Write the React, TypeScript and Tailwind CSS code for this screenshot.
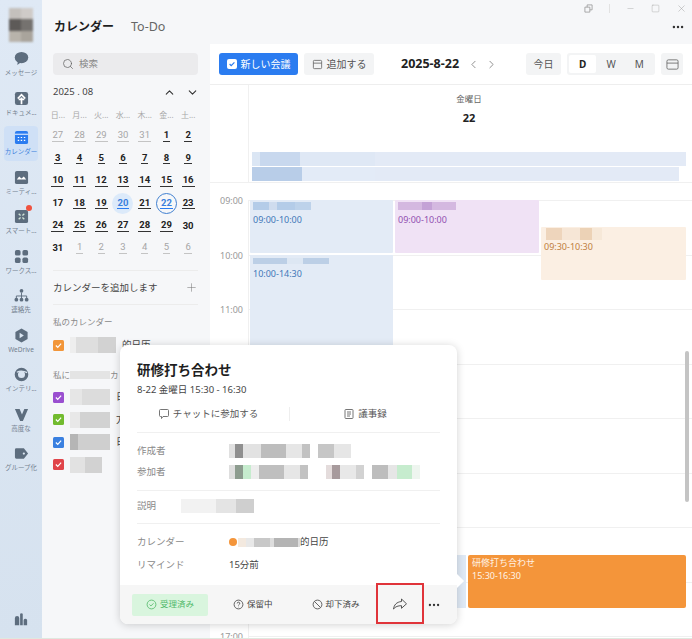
import { ChevronDown, ChevronLeft, ChevronRight, ChevronUp, Plus, Search, X, Minus, Square, MoreHorizontal } from "lucide-react";

const ink = "#5d6d7e";

// mosaic used where names were blurred out in the screenshot
function Blur({ cells, h, className = "" }: { cells: [string, number][]; h: number; className?: string }) {
  return (
    <div className={`flex shrink-0 blur-[0.6px] ${className}`} style={{ height: h }}>
      {cells.map(([color, w], i) => (
        <div key={i} style={{ background: color, width: w }} />
      ))}
    </div>
  );
}

const railIcons: Record<string, React.ReactNode> = {
  msg: (
    <svg viewBox="0 0 16 16" className="h-[15px] w-[15px]" fill={ink}>
      <ellipse cx="8" cy="7" rx="7.2" ry="6" />
      <path d="M4 11l-.5 4 4-3z" />
    </svg>
  ),
  doc: (
    <svg viewBox="0 0 16 16" className="h-[15px] w-[15px]">
      <rect x="1" y="1" width="14" height="14" rx="2.5" fill={ink} />
      <path d="M8 14V7M4 8l4-4 4 4M5 9h6" stroke="#fff" strokeWidth="1.8" fill="none" />
    </svg>
  ),
  cal: (
    <svg viewBox="0 0 16 16" className="h-[15px] w-[15px]">
      <rect x="1" y="1" width="14" height="14" rx="2" fill="#2b7cf0" />
      <rect x="1" y="4" width="14" height="1" fill="#fff" />
      <path d="M4 8h1.5M7.2 8h1.5M10.5 8H12M4 11h1.5M7.2 11h1.5M10.5 11H12" stroke="#fff" strokeWidth="1.2" />
    </svg>
  ),
  meet: (
    <svg viewBox="0 0 16 16" className="h-[15px] w-[15px]">
      <rect x="1" y="1" width="14" height="14" rx="2" fill={ink} />
      <path d="M3 10l2.5-3 2.5 2 2.500-2 2.500 3z" fill="#fff" />
    </svg>
  ),
  smart: (
    <svg viewBox="0 0 16 16" className="h-[15px] w-[15px]">
      <rect x="1" y="1" width="14" height="14" rx="2" fill={ink} />
      <path d="M5 5l2 2M11 5L9 7M5 11l2-2M11 11L9 9" stroke="#cfe3d8" strokeWidth="1.400" />
    </svg>
  ),
  work: (
    <svg viewBox="0 0 16 16" className="h-[15px] w-[15px]" fill={ink}>
      <rect x="1" y="1" width="6" height="6" rx="1.800" />
      <rect x="9" y="1" width="6" height="6" rx="1.800" />
      <rect x="1" y="9" width="6" height="6" rx="1.800" />
      <rect x="9" y="9" width="6" height="6" rx="1.800" />
    </svg>
  ),
  org: (
    <svg viewBox="0 0 16 16" className="h-[15px] w-[15px]" fill={ink}>
      <circle cx="8" cy="3" r="2" />
      <path d="M2.500 11V8.500h11V11M8 5v6" stroke={ink} strokeWidth="1" fill="none" />
      <circle cx="2.500" cy="12.500" r="2" />
      <circle cx="8" cy="12.500" r="2" />
      <circle cx="13.500" cy="12.500" r="2" />
    </svg>
  ),
  drive: (
    <svg viewBox="0 0 16 16" className="h-[15px] w-[15px]">
      <path d="M8 .5l6.500 3.700v7.600L8 15.500l-6.500-3.700V4.200z" fill={ink} />
      <path d="M6 5l4.500 3L6 11z" fill="#dbe6f2" />
    </svg>
  ),
  ai: (
    <svg viewBox="0 0 16 16" className="h-[15px] w-[15px]" fill="none">
      <circle cx="8" cy="8" r="5.500" stroke={ink} strokeWidth="3.500" />
      <path d="M3 5.500C6 4 10 4 14 6" stroke="#dbe6f2" strokeWidth="1.200" />
    </svg>
  ),
  v: (
    <svg viewBox="0 0 16 16" className="h-[15px] w-[15px]" fill={ink}>
      <path d="M1 2h5l2.500 6L11 2h4l-5.500 13H6.500z" />
    </svg>
  ),
  tag: (
    <svg viewBox="0 0 16 16" className="h-[15px] w-[15px]" fill={ink}>
      <path d="M1 4a1.500 1.500 0 0 1 1.500-1.500h8L15 8l-4.500 5.500h-8A1.500 1.500 0 0 1 1 12z" />
      <circle cx="10.500" cy="8" r="1.200" fill="#dbe6f2" />
    </svg>
  ),
};

const railItems = [
  { icon: "msg", label: "メッセージ" },
  { icon: "doc", label: "ドキュメ..." },
  { icon: "cal", label: "カレンダー", active: true },
  { icon: "meet", label: "ミーティ..." },
  { icon: "smart", label: "スマート...", badge: true },
  { icon: "work", label: "ワークス..." },
  { icon: "org", label: "連絡先" },
  { icon: "drive", label: "WeDrive" },
  { icon: "ai", label: "インテリ..." },
  { icon: "v", label: "高度な" },
  { icon: "tag", label: "グループ化" },
];

function Rail() {
  return (
    <div className="flex h-full w-[42px] shrink-0 flex-col items-center bg-gradient-to-b from-[#dfe9f5] to-[#d6e2ef]">
      <div className="mt-[8px] mb-[5px] grid h-[34px] w-[24px] grid-cols-2 blur-[1px]">
        <div className="bg-[#c4c0bc]" />
        <div className="bg-[#cfcbc8]" />
        <div className="bg-[#5d5a58]" />
        <div className="bg-[#75726f]" />
        <div className="bg-[#b8b3ab]" />
        <div className="bg-[#a9a49c]" />
      </div>
      {railItems.map((item) => (
        <div
          key={item.label}
          className={`relative mb-[4.500px] flex h-[35px] w-[34px] flex-col items-center justify-center gap-[2px] rounded-[4px] ${item.active ? "bg-[#cfe0f6]" : ""}`}
        >
          {railIcons[item.icon]}
          {item.badge && <span className="absolute top-[0px] right-[6px] h-[6px] w-[6px] rounded-full bg-[#f0523f]" />}
          <span className={`w-[42px] overflow-hidden text-center text-[6.500px] leading-[10px] whitespace-nowrap ${item.active ? "text-[#3b7fdc]" : "text-[#748190]"}`}>
            {item.label}
          </span>
        </div>
      ))}
      <div className="mt-auto mb-[13px]">
        <svg viewBox="0 0 16 16" className="h-[14px] w-[14px]" fill={ink}>
          <path d="M1 7a2.500 2.500 0 0 1 5 0v8H1zM7 2a2.500 2.500 0 0 1 3 0v13H7zM11 9a2.200 2.200 0 0 1 4 0v6h-4z" />
        </svg>
      </div>
    </div>
  );
}

const weekdays = ["日...", "月...", "火...", "水...", "木...", "金...", "土..."];
const dates = [
  27, 28, 29, 30, 31, 1, 2, 3, 4, 5, 6, 7, 8, 9, 10, 11, 12, 13, 14, 15, 16, 17, 18, 19, 20, 21, 22, 23, 24, 25, 26, 27,
  28, 29, 30, 31, 1, 2, 3, 4, 5, 6,
];

function MiniCalendar() {
  return (
    <div className="mt-[1px] -ml-[6px] grid w-[152px] grid-cols-7">
      {weekdays.map((d) => (
        <div key={d} className="flex h-[21px] items-center justify-center text-[8px] text-[#a8a8a8]">
          {d}
        </div>
      ))}
      {dates.map((d, i) => {
        const muted = i < 5 || i > 35;
        const noLine = i === 21 || i === 34 || i === 35;
        const today = i === 24;
        const picked = i === 26;
        return (
          <div key={i} className="flex h-[22.400px] items-center justify-center">
            <span
              className={`flex h-[21px] w-[21px] items-center justify-center rounded-full font-['Roboto',sans-serif] text-[9.500px] leading-none ${
                today ? "bg-[#dceafa]" : picked ? "border-[1.500px] border-[#3f7fd0]" : ""
              }`}
            >
              <span
                className={`px-[1px] pb-[1px] ${muted ? "font-normal" : "font-bold"} ${noLine ? "" : "border-b"} ${
                  today || picked
                    ? "border-[#2b7cf0] text-[#3b7fdc]"
                    : muted
                      ? "border-[#c4c4c4] text-[#a6a6a6]"
                      : "border-[#333] text-[#222]"
                }`}
              >
                {d}
              </span>
            </span>
          </div>
        );
      })}
    </div>
  );
}

function Check({ color }: { color: string }) {
  return (
    <span className={`flex h-[11px] w-[11px] shrink-0 items-center justify-center rounded-[1.500px] ${color}`}>
      <svg viewBox="0 0 12 12" className="h-[9px] w-[9px]" fill="none" stroke="#fff" strokeWidth="1.600">
        <path d="M2.500 6l2.500 2.500L9.500 3.500" />
      </svg>
    </span>
  );
}

const otherCalendars = [
  { color: "bg-[#9a4fd0]", cells: [["#e6e6e6", 12], ["#dcdcdc", 28]] as [string, number][], tail: "日" },
  { color: "bg-[#72bb2f]", cells: [["#e8e8e8", 10], ["#d2d2d2", 30]] as [string, number][], tail: "方" },
  { color: "bg-[#3a80e0]", cells: [["#b5b5b5", 8], ["#cfcfcf", 32]] as [string, number][], tail: "日历" },
  { color: "bg-[#e0444a]", cells: [["#e2e2e2", 15], ["#d2d2d2", 17]] as [string, number][], tail: "" },
];

function Sidebar() {
  return (
    <div className="flex w-[168px] shrink-0 flex-col bg-[#f6f7f9] px-[11px] pt-[9px]">
      <div className="flex h-[22px] w-[145px] items-center gap-[5px] rounded-[4px] bg-[#ebebed] px-[9px] text-[9.500px] text-[#888]">
        <Search size={12} strokeWidth={1.500} className="text-[#666]" />
        検索
      </div>
      <div className="mt-[6px] flex h-[22px] w-[146px] items-center justify-between text-[9.500px] text-[#444]">
        <span>2025 . 08</span>
        <span className="-ml-[4px] flex gap-[10px] text-[#333]">
          <ChevronUp size={13} />
          <ChevronDown size={13} />
        </span>
      </div>
      <MiniCalendar />
      <div className="mt-[11px] w-[145px] border-t border-[#ececec]" />
      <div className="flex h-[33px] w-[145px] items-center justify-between text-[9.500px] text-[#444]">
        カレンダーを追加します
        <Plus size={13} strokeWidth={1} className="text-[#777]" />
      </div>
      <div className="w-[145px] border-t border-[#ececec]" />
      <div className="mt-[10px] text-[8.500px] leading-[13px] text-[#8a8a8a]">私のカレンダー</div>
      <div className="mt-[9px] flex h-[16px] items-center gap-[6px] text-[9.500px] text-[#444]">
        <Check color="bg-[#f2963a]" />
        <Blur h={16} cells={[["#eeeeee", 6], ["#dedede", 22], ["#d2d2d2", 18]]} />
        的日历
      </div>
      <div className="mt-[15px] flex items-center text-[8.500px] leading-[13px] text-[#8a8a8a]">
        私に
        <Blur h={8} cells={[["#e4e4e4", 40]]} />
        カ
      </div>
      <div className="mt-[8px] flex flex-col gap-[6.400px]">
        {otherCalendars.map((c) => (
          <div key={c.color} className="flex h-[16px] items-center gap-[6px] text-[9.500px] text-[#444]">
            <Check color={c.color} />
            <Blur h={16} cells={c.cells} />
            {c.tail}
          </div>
        ))}
      </div>
    </div>
  );
}

function Toolbar() {
  return (
    <div className="flex h-[41px] shrink-0 items-center border-b border-[#eeeeee] pl-[9px] text-[10px]">
      <button className="flex h-[22px] w-[79px] items-center justify-center gap-[4px] rounded-[3px] bg-[#2b7cf0] text-[10px] text-white">
        <span className="flex h-[10px] w-[10px] items-center justify-center rounded-[2px] bg-white">
          <svg viewBox="0 0 10 10" className="h-[8px] w-[8px]" fill="none" stroke="#2b7cf0" strokeWidth="1.500">
            <path d="M2 5l2 2 4-4" />
          </svg>
        </span>
        新しい会議
      </button>
      <button className="ml-[6px] flex h-[22px] w-[70px] items-center justify-center gap-[4px] rounded-[3px] bg-[#f3f4f5] text-[#555]">
        <svg viewBox="0 0 12 12" className="h-[11px] w-[11px]" fill="none" stroke="#666" strokeWidth="0.900">
          <rect x="1.500" y="1.500" width="9" height="9" rx="1" />
          <path d="M1.500 4.500h9" />
        </svg>
        追加する
      </button>
      <span className="ml-[27px] text-[12.500px] font-bold text-[#222]">2025-8-22</span>
      <ChevronLeft size={13} strokeWidth={1.500} className="ml-[8px] text-[#777]" />
      <ChevronRight size={13} strokeWidth={1.500} className="ml-[5px] text-[#777]" />
      <button className="ml-[28px] h-[22px] w-[35px] rounded-[3px] bg-[#f3f4f5] text-[#555]">今日</button>
      <div className="ml-[6px] flex h-[22px] w-[88px] items-center rounded-[3px] bg-[#f3f4f5] p-[2px] text-[10px] text-[#555]">
        <span className="flex h-full w-[28px] items-center justify-center rounded-[2px] bg-white font-bold text-[#222]">D</span>
        <span className="flex h-full w-[30px] items-center justify-center">W</span>
        <span className="flex h-full w-[28px] items-center justify-center">M</span>
      </div>
      <button className="ml-[6px] flex h-[22px] w-[22px] items-center justify-center rounded-[3px] bg-[#f3f4f5]">
        <svg viewBox="0 0 14 14" className="h-[13px] w-[13px]" fill="none" stroke="#666" strokeWidth="0.900">
          <rect x="1" y="2" width="12" height="10" rx="1.500" />
          <path d="M1 5.500h12" />
        </svg>
      </button>
    </div>
  );
}

const hours = ["09:00", "10:00", "11:00", "", "", "", "", "16:00", "17:00"];

function DayGrid() {
  return (
    <div className="flex min-h-0 flex-1 flex-col overflow-hidden">
      <div className="flex h-[98px] shrink-0 border-b border-[#f0f0f0]">
        <div className="w-[39px] shrink-0 border-r border-[#f0f0f0]" />
        <div className="flex-1 pt-[8px] pr-[6px] pl-[3px]">
          <div className="text-center text-[8.500px] leading-[12px] text-[#666]">金曜日</div>
          <div className="mt-[6px] text-center text-[11px] leading-[14px] font-bold text-[#222]">22</div>
          <div className="mt-[27px] flex h-[14px] bg-[#e3eaf6]">
            <Blur h={14} cells={[["#dbe6f4", 8], ["#c8d8ee", 40], ["#dfe8f5", 75]]} />
          </div>
          <div className="mt-[1px] mr-[7px] flex h-[14px] bg-[#e3eaf6]">
            <Blur h={14} cells={[["#b8cde8", 50], ["#e3ebf7", 73]]} />
          </div>
        </div>
      </div>
      <div className="relative flex-1">
        <div className="pt-[17px]">
          {hours.map((h, i) => (
            <div key={i} className="flex h-[54.500px]">
              <div className="w-[39px] shrink-0 border-r border-[#f0f0f0] pl-[10px]">
                <span className="relative -top-[6px] block text-[9px] leading-[14px] text-[#999]">{h}</span>
              </div>
              <div className="flex-1 border-t border-[#f0f0f0]" />
            </div>
          ))}
        </div>

        <div className="absolute top-[17px] left-[40px] h-[53px] w-[143px] rounded-[1px] bg-[#e3ebf6] pl-[3px] text-[9px] text-[#3f78b8]">
          <Blur h={8} className="mt-[2px]" cells={[["#b4cce8", 16], ["#cfdcee", 8], ["#b4cce8", 18], ["#bdd2ea", 16]]} />
          <div className="mt-[3px]">09:00-10:00</div>
        </div>
        <div className="absolute top-[72px] left-[40px] h-[300px] w-[143px] bg-[#e3ebf6] pl-[3px] text-[9px] text-[#3f78b8]">
          <Blur h={6} className="mt-[3px]" cells={[["#bccfe6", 34], ["#dde7f3", 16], ["#bccfe6", 26]]} />
          <div className="mt-[3px]">10:00-14:30</div>
        </div>
        <div className="absolute top-[17px] left-[185px] h-[53px] w-[144px] rounded-[1px] bg-[#f0e2f5] pl-[3px] text-[9px] text-[#9050b0]">
          <Blur h={8} className="mt-[2px]" cells={[["#d4b8e0", 24], ["#c4a2d6", 10], ["#d4b8e0", 24]]} />
          <div className="mt-[3px]">09:00-10:00</div>
        </div>
        <div className="absolute top-[44px] left-[331px] h-[53px] w-[145px] rounded-[1px] bg-[#fbefe3] pl-[3px] text-[9px] text-[#c08040]">
          <Blur h={12} className="mt-[1px] ml-[2px]" cells={[["#eed5bc", 16], ["#f6e6d6", 18], ["#ecd2b6", 12], ["#f6e8d8", 10]]} />
          <div className="mt-[0px]">09:30-10:30</div>
        </div>
        <div className="absolute top-[372px] left-[240px] h-[53px] w-[16px] bg-[#dfe9f5]" />
        <div className="absolute top-[372px] left-[258px] h-[53px] w-[218px] rounded-[2px] bg-[#f4953a] pl-[4px] text-[9px] leading-[13px] text-[#fff3e6]">
          <div className="mt-[1px]">研修打ち合わせ</div>
          <div>15:30-16:30</div>
        </div>
        <div className="absolute top-[168px] right-[3px] h-[151px] w-[4px] rounded-full bg-[#c4c4c4]" />
      </div>
    </div>
  );
}

function InfoRow({ label, children, className = "", labelWidth = "w-[92px]" }: { label: string; children: React.ReactNode; className?: string; labelWidth?: string }) {
  return (
    <div className={`flex items-center text-[9.500px] ${className}`}>
      <span className={`shrink-0 text-[#8a8a8a] ${labelWidth}`}>{label}</span>
      {children}
    </div>
  );
}

function Popover() {
  return (
    <div className="absolute top-[345px] left-[120px] flex h-[279px] w-[337px] flex-col rounded-[8px] bg-white shadow-[0_1px_8px_rgba(0,0,0,0.18)]">
      <span className="absolute top-[231px] -right-[5px] h-[10px] w-[10px] rotate-45 bg-white" />
      <div className="flex-1 px-[17px] pt-[15px]">
        <div className="text-[13.500px] leading-[20px] font-bold text-[#1f1f1f]">研修打ち合わせ</div>
        <div className="mt-[3px] text-[9.500px] leading-[14px] text-[#444]">8-22 金曜日 15:30 - 16:30</div>
        <div className="mt-[7px] flex h-[20px] items-center text-[9.500px] text-[#555]">
          <div className="flex w-[152px] items-center justify-center gap-[3px] pr-[10px]">
            <svg viewBox="0 0 12 12" className="h-[12px] w-[12px]" fill="none" stroke="#666" strokeWidth="0.900">
              <path d="M1.500 2.500a1 1 0 0 1 1-1h7a1 1 0 0 1 1 1v5a1 1 0 0 1-1 1H5l-1.500 2v-2h-1a1 1 0 0 1-1-1z" />
            </svg>
            チャットに参加する
          </div>
          <div className="h-[14px] border-l border-[#eeeeee]" />
          <div className="flex flex-1 items-center justify-center gap-[3px]">
            <svg viewBox="0 0 12 12" className="h-[12px] w-[12px]" fill="none" stroke="#666" strokeWidth="0.900">
              <rect x="2" y="1.500" width="8" height="9" rx="0.800" />
              <path d="M4 4h4M4 6h4M4 8h3" />
            </svg>
            議事録
          </div>
        </div>
        <div className="mt-[8px] border-t border-[#f0f0f0]" />
        <InfoRow label="作成者" className="mt-[10px] h-[16px]">
          <Blur h={14} cells={[["#e0e0e0", 6], ["#8f8f8f", 8], ["#e2e2e2", 18], ["#bdbdbd", 25], ["#e6e6e6", 16], ["#c2c2c2", 8], ["#fff", 8], ["#c6c6c6", 16], ["#e6e6e6", 17]]} />
        </InfoRow>
        <InfoRow label="参加者" className="mt-[5px] h-[16px]">
          <Blur h={14} cells={[["#dedede", 6], ["#8d9c8f", 8], ["#c6ecce", 8], ["#ededed", 8], ["#bfbfbf", 25], ["#e6e6e6", 16], ["#c2c2c2", 8], ["#fff", 18], ["#e4dcdc", 6], ["#a79a9c", 8], ["#e8e8e8", 16], ["#d2d2d2", 8], ["#fff", 8], ["#bdbdbd", 16], ["#e6e6e6", 9], ["#c6ecce", 15], ["#eef5ef", 8]]} />
        </InfoRow>
        <div className="mt-[10px] border-t border-[#f0f0f0]" />
        <InfoRow label="説明" labelWidth="w-[44px]" className="mt-[7px] h-[16px]">
          <Blur h={14} cells={[["#f2f2f2", 35], ["#e4e4e4", 20], ["#cfcfcf", 18]]} />
        </InfoRow>
        <div className="mt-[9px] border-t border-[#f0f0f0]" />
        <InfoRow label="カレンダー" className="mt-[10px] h-[16px]">
          <span className="mr-[1px] h-[8px] w-[8px] rounded-full bg-[#f4953a]" />
          <Blur h={9} cells={[["#f3e9df", 8], ["#e8e8e8", 8], ["#c8c8c8", 16], ["#dddddd", 4], ["#b4b4b4", 24], ["#dcdcdc", 2]]} />
          <span className="text-[#444]">的日历</span>
        </InfoRow>
        <InfoRow label="リマインド" className="mt-[7px] h-[16px]">
          <span className="text-[#444]">15分前</span>
        </InfoRow>
      </div>
      <div className="relative flex h-[39px] shrink-0 items-center rounded-b-[8px] bg-[#f6f6f6] pl-[12px] text-[8.500px] text-[#444]">
        <div className="flex h-[22px] w-[76px] items-center justify-center gap-[3px] rounded-[2px] bg-[#d9f5de] text-[#52b96a]">
          <svg viewBox="0 0 12 12" className="h-[11px] w-[11px]" fill="none" stroke="#52b96a" strokeWidth="0.900">
            <circle cx="6" cy="6" r="4.800" />
            <path d="M3.800 6l1.600 1.600 2.800-2.900" />
          </svg>
          受理済み
        </div>
        <div className="ml-[25px] flex items-center gap-[3px]">
          <svg viewBox="0 0 12 12" className="h-[11px] w-[11px]" fill="none" stroke="#444" strokeWidth="0.900">
            <circle cx="6" cy="6" r="4.800" />
            <path d="M4.600 4.800a1.400 1.400 0 1 1 2 1.300c-.4.200-.6.500-.6.900M6 8.500v.5" />
          </svg>
          保留中
        </div>
        <div className="ml-[39px] flex items-center gap-[3px]">
          <svg viewBox="0 0 12 12" className="h-[11px] w-[11px]" fill="none" stroke="#444" strokeWidth="0.900">
            <circle cx="6" cy="6" r="4.800" />
            <path d="M2.700 2.700l6.600 6.600" />
          </svg>
          却下済み
        </div>
        <div className="absolute top-[-2px] left-[256px] flex h-[41px] w-[48px] items-center justify-center border-2 border-[#e0343a]">
          <svg viewBox="0 0 16 16" className="h-[16px] w-[16px]" fill="none" stroke="#444" strokeWidth="0.900">
            <path d="M9.500 3l5 4.800-5 4.500V9.700C6 9.700 3.500 10.500 1.500 13c.5-4 3-7 8-7.500z" strokeLinejoin="round" />
          </svg>
        </div>
        <MoreHorizontal size={14} strokeWidth={2} className="absolute top-[13px] left-[307px] text-[#333]" />
      </div>
    </div>
  );
}

export default function App() {
  return (
    <div className="relative flex h-[639px] w-[692px] overflow-hidden bg-white font-['Noto_Sans','Noto_Sans_CJK_JP',sans-serif]">
      <Rail />
      <div className="flex min-w-0 flex-1 flex-col">
        <div className="flex h-[44px] shrink-0 bg-[#f6f7f9]">
          <div className="flex items-center gap-[17px] pt-[10px] pl-[12px] text-[12px]">
            <span className="font-bold text-[#1f1f1f]">カレンダー</span>
            <span className="text-[12.500px] text-[#666]">To-Do</span>
          </div>
          <div className="ml-auto flex flex-col items-end pt-[3px] pr-[5px] text-[#999]">
            <div className="flex h-[11px] items-center gap-[16px]">
              <svg viewBox="0 0 10 10" className="h-[9px] w-[9px]" fill="none" stroke="#999" strokeWidth="0.900">
                <path d="M1 3.500h5.500V9H1zM3.500 3.500V1H9v5.500H6.500" />
              </svg>
              <span className="h-[9px] border-l border-[#e2e2e2]" />
              <Minus size={9} strokeWidth={1} />
              <Square size={9} strokeWidth={1} />
              <X size={11} strokeWidth={1} />
            </div>
            <MoreHorizontal size={14} strokeWidth={2.200} className="mt-[6px] mr-[2px] text-[#333]" />
          </div>
        </div>
        <div className="flex min-h-0 flex-1">
          <Sidebar />
          <div className="flex min-w-0 flex-1 flex-col rounded-tl-[2px] bg-white">
            <Toolbar />
            <DayGrid />
          </div>
        </div>
      </div>
      <Popover />
      <div className="absolute right-0 bottom-0 left-0 h-[1px] bg-[#dfe8df]" />
    </div>
  );
}
